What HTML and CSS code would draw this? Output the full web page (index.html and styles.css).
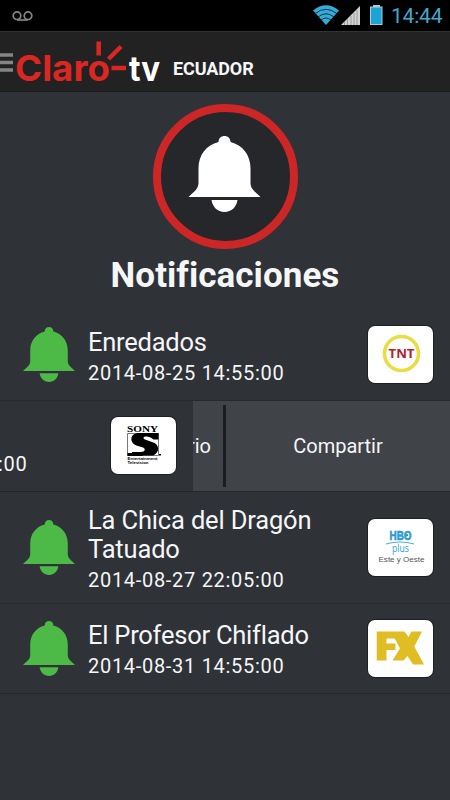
FILE: index.html
```html
<!DOCTYPE html>
<html lang="es">
<head>
<meta charset="utf-8">
<title>Claro tv</title>
<link rel="stylesheet" href="styles.css">
</head>
<body>
<svg class="defs" width="0" height="0">
  <symbol id="bell" viewBox="0 0 72 76">
    <path d="M30 6C30-2 42-2 42 6C54 9 62 19 62 32V47C62 53 67 56 72 61H0C5 56 10 53 10 47V32C10 19 18 9 30 6Z"/>
    <path d="M23 64H49C48 71 43 76 36 76S24 71 23 64Z"/>
  </symbol>
</svg>
<div class="screen">
  <div class="status">
    <svg class="voicemail" width="21" height="10" viewBox="0 0 21 10"><g fill="none" stroke="#858585" stroke-width="1.7"><circle cx="5" cy="4.7" r="3.8"/><circle cx="16" cy="4.7" r="3.8"/><path d="M5 9H16"/></g></svg>
    <div class="indicators">
      <svg width="70" height="22" viewBox="0 0 70 22">
        <path d="M0 5.5Q13-5 26 5.5L13 20Z" fill="#36abd6"/>
        <path d="M2 8.6Q13 0 24 8.6M5 12Q13 5.500 21 12M8 15Q13 11 18 15" fill="none" stroke="#073449" stroke-width="1"/>
        <path d="M28 20L47 1V20Z" fill="#d3d3cf"/>
        <path d="M31.500 17V20M34.500 14V20M38 11V20M41 8V20M44 5V20" stroke="#8a8a88" stroke-width=".8"/>
        <path d="M60 0H67V1.500H69.500V20H57V1.500H60Z" fill="#b7c9ce"/><path d="M58 2.500H68.500V19H58Z" fill="#1ba5d6"/>
      </svg>
      <span class="clock">14:44</span>
    </div>
  </div>
  <header class="bar">
    <svg width="165" height="60" viewBox="0 0 165 60">
      <path d="M0 23H13M0 30.500H13M0 38H13" stroke="#858585" stroke-width="3.500"/>
      <text class="brand" x="15" y="49" textLength="95" lengthAdjust="spacingAndGlyphs">Claro</text>
      <path d="M98.700 9.500V23.500M108.500 27L121 14.500M111.500 36H126" stroke="#dc2622" stroke-width="4.500"/>
      <text class="brand tv" x="129" y="49" textLength="31" lengthAdjust="spacingAndGlyphs">tv</text>
    </svg>
    <span class="country">ECUADOR</span>
  </header>
  <section class="hero">
    <div class="ring"><svg width="73" height="76"><use href="#bell"/></svg></div>
    <h1>Notificaciones</h1>
  </section>
  <main>
    <article class="row first">
      <svg class="bell"><use href="#bell"/></svg>
      <div class="info"><h2>Enredados</h2><p>2014-08-25 14:55:00</p></div>
      <svg class="channel" viewBox="0 0 65 57"><circle cx="33.500" cy="27.500" r="17" fill="none" stroke="#e8dd45" stroke-width="3.600"/><text x="20.500" y="31.900" class="tnt" textLength="26" lengthAdjust="spacingAndGlyphs">TNT</text></svg>
    </article>
    <article class="swiped">
      <div class="slid"><p>:00</p>
        <svg class="channel" viewBox="0 0 65 57"><text x="16" y="14.500" class="sony" textLength="31" lengthAdjust="spacingAndGlyphs">SONY</text><path d="M16.500 16.500H47.500V38.500H16.500Z" fill="#fff" stroke="#555" stroke-width=".8"/><path d="M47.500 16H28C18 16 18 27 27 29L32 30.500C35 32 34 35 30 35H21V38.500H42C49 36 49 27 41 25L34 22.500C31 21 33 19 36 19.500Q40 20 42.500 22.500H47.500Z" fill="#000"/><path d="M16.500 36H32V39H16.500ZM48 37H50V38.500H48Z" fill="#000"/><text x="16.500" y="43.300" class="tiny" textLength="30" lengthAdjust="spacingAndGlyphs">Entertainment</text><text x="16.500" y="47.300" class="tiny" textLength="21" lengthAdjust="spacingAndGlyphs">Television</text></svg>
      </div>
      <div class="actions"><div class="remind"><span>rio</span></div><div class="share">Compartir</div></div>
    </article>
    <article class="row tall">
      <svg class="bell"><use href="#bell"/></svg>
      <div class="info"><h2>La Chica del Dragón Tatuado</h2><p>2014-08-27 22:05:00</p></div>
      <svg class="channel" viewBox="0 0 65 57"><text x="21.500" y="20.500" class="hbo" textLength="22" lengthAdjust="spacingAndGlyphs">HBO</text><circle cx="38.800" cy="16.200" r="1.300" fill="#2c8fc4"/><path d="M18 25Q32 21 46 25" fill="none" stroke="#55aed4" stroke-width="1"/><text x="24" y="33" class="plus" textLength="17" lengthAdjust="spacingAndGlyphs">plus</text><text x="10.500" y="43.200" class="este" textLength="46" lengthAdjust="spacingAndGlyphs">Este y Oeste</text></svg>
    </article>
    <article class="row last">
      <svg class="bell"><use href="#bell"/></svg>
      <div class="info"><h2>El Profesor Chiflado</h2><p>2014-08-31 14:55:00</p></div>
      <svg class="channel" viewBox="0 0 65 57"><path d="M8.700 11.500H36.500L40.500 17L43.500 11.500H54L46.300 26.500L56 44.500H45L39.500 36L35.500 40.500H24.500L32 28.500L27.500 20V30H18.500V40.500H8.700ZM18.500 18.500V23.500H27.500V20L26.500 18.500Z" fill="#e0bd22" fill-rule="evenodd"/></svg>
    </article>
  </main>
</div>
</body>
</html>
```

FILE: styles.css
```css
* { box-sizing: border-box; }
body, h1, h2, p { margin: 0; }
body { background: #2f3237; font-family: Roboto, "Liberation Sans", sans-serif; color: #f5f6f7; }
.defs { position: absolute; }
.screen { width: 450px; height: 800px; overflow: hidden; background: #2f3237; }
.status { height: 31px; background: #000; display: flex; justify-content: space-between; align-items: center; padding: 0 7px 0 12px; }
.indicators { display: flex; align-items: center; }
.clock { width: 52px; margin-left: 8px; color: #42a9cc; font-size: 21px; line-height: 31px; letter-spacing: -.2px; padding-top: 2px; }
.bar { height: 61px; background: #222; border-top: 1px solid #333; border-bottom: 1px solid #1c1c1d; display: flex; }
.brand { font: 700 36px Inter, sans-serif; fill: #dc2622; }
.tv { fill: #fff; font-size: 35px; font-weight: 700; }
.country { margin-left: 8px; padding-top: 26px; font-size: 18px; line-height: 22px; font-weight: 700; letter-spacing: -.1px; }
.hero { height: 218px; padding-top: 12px; display: flex; flex-direction: column; align-items: center; }
.ring { width: 145px; height: 145px; border: 8px solid #cd2627; border-radius: 50%; background: #26272a; display: flex; align-items: center; justify-content: center; fill: #fff; padding-right: 2px; padding-bottom: 6px; }
h1 { font-size: 35px; line-height: 40px; font-weight: 700; margin-top: 7px; white-space: nowrap; letter-spacing: .05px; }
.row { display: flex; align-items: center; padding: 0 17px 0 23px; height: 91px; border-bottom: 1px solid #27292d; }
.bell { width: 52px; height: 55px; fill: #4dba48; flex: none; }
.info { flex: 1; height: 56px; margin-left: 13px; padding-right: 35px; }
.row h2 { font-size: 25.5px; line-height: 29px; font-weight: 400; letter-spacing: -.24px; }
.row p, .slid p { font-size: 20px; line-height: 32px; letter-spacing: .7px; white-space: nowrap; }
.channel { width: 65px; height: 57px; border-radius: 7px; background: #fff; flex: none; box-shadow: 0 0 0 1px #1d1f22; }
.first { padding-bottom: 2px; }
.first .info { height: 53px; }
.tall { height: 112px; padding-bottom: 1px; }
.tall .info { height: 83px; padding-right: 30px; }
.row.tall h2 { letter-spacing: -.16px; }
.last { height: 90px; }
.last .info { height: 55px; }
.swiped { display: flex; height: 91px; border-bottom: 1px solid #25272a; }
.slid { width: 193px; display: flex; justify-content: space-between; align-items: center; padding-right: 17px; padding-bottom: 2px; }
.slid p { padding-top: 37px; margin-left: -2px; }
.actions { flex: 1; display: flex; background: #404347; font-size: 20px; line-height: 90px; }
.remind { width: 33px; border-right: 3px solid #1c1d20; margin: 4px 0; line-height: 82px; overflow: hidden; display: flex; justify-content: flex-end; padding-right: 12px; }
.share { flex: 1; text-align: center; }
.tnt { font: 700 13px "Open Sans", sans-serif; fill: #b4202c; }
.sony { font: 700 8px "Liberation Serif", serif; fill: #000; }
.tiny { font: 700 4px "Liberation Sans", sans-serif; fill: #000; }
.hbo { font: 700 12.5px "Liberation Sans", sans-serif; fill: #2c9bce; stroke: #2c9bce; stroke-width: .6; }
.plus { font: 10.5px "Open Sans", sans-serif; fill: #319fd0; }
.este { font: 8px "Liberation Sans", sans-serif; fill: #555; }
```
